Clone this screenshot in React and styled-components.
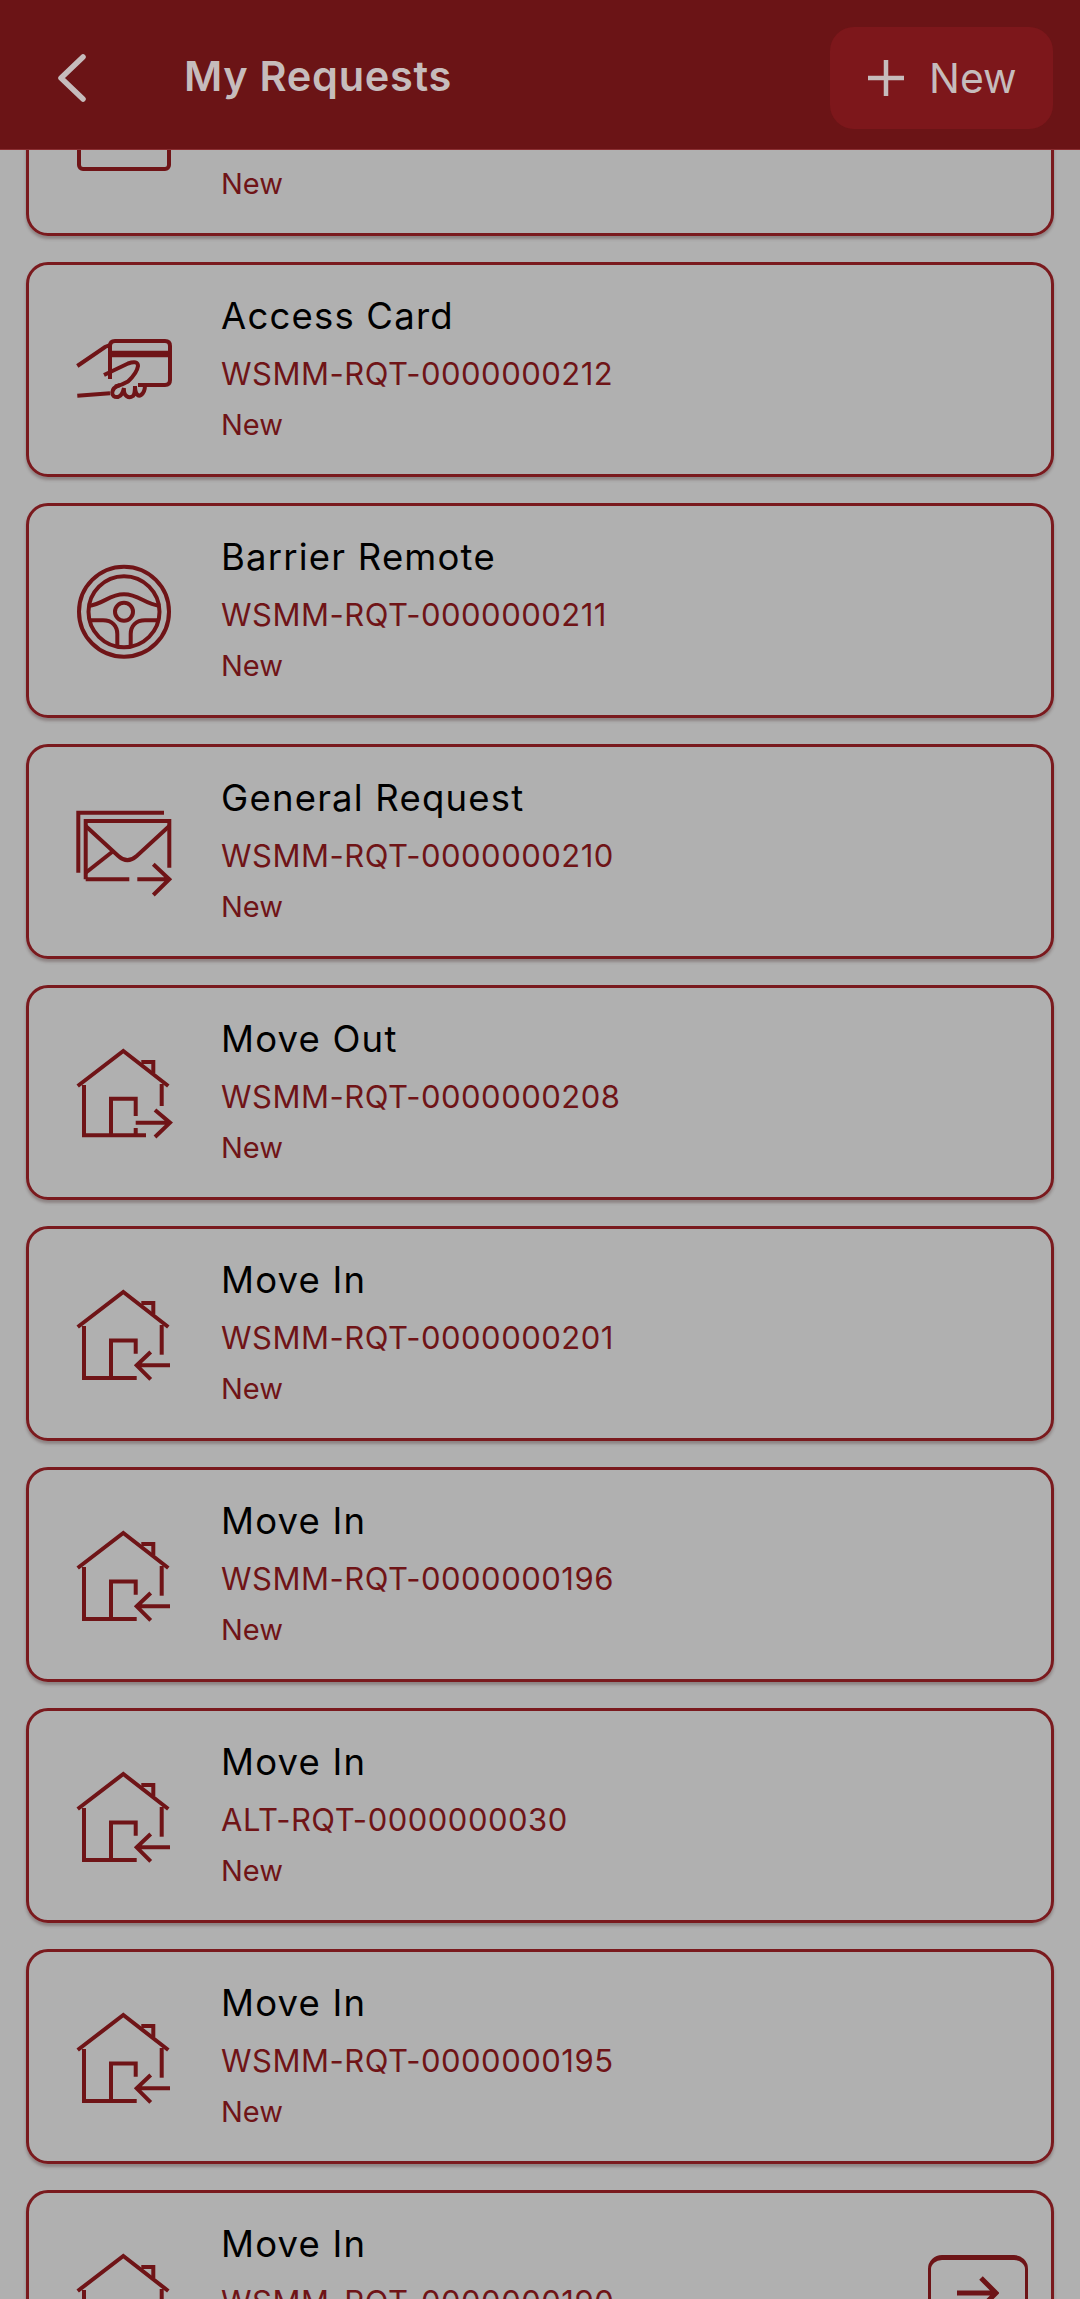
import React from "react";
import styled, { createGlobalStyle } from "styled-components";

const Global = createGlobalStyle`
  html, body { margin: 0; padding: 0; background: #b0b0b0; }
  * { box-sizing: border-box; }
`;
const Page = styled.div`
  position: relative; width: 1080px; height: 2299px; overflow: hidden;
  background: #b0b0b0; font-family: "Inter", "Liberation Sans", sans-serif;
`;
const Header = styled.header`
  position: absolute; top: 0; left: 0; right: 0; z-index: 2; height: 150px;
  display: flex; align-items: center; padding: 0 27px 0 54px;
  background: #6b1416; border-bottom: 1px solid #8a2f32;
`;
const Back = styled.svg`width: 36px; height: 52px; flex: none; margin-top: 7px;`;
const Title = styled.h1`
  flex: 1; margin: 2px 0 0 94px; font-size: 41.5px; line-height: 50px; font-weight: 600; color: #c6bcbc; letter-spacing: .7px;
`;
const NewButton = styled.div`
  width: 223px; height: 102px; margin-top: 6px; border-radius: 24px; background: #7d171b;
  display: flex; align-items: center; padding-left: 38px; gap: 25px;
  color: #c6bcbc; font-size: 41px; line-height: 50px;
`;
const List = styled.main`
  display: flex; flex-direction: column; gap: 26px; padding: 21px 26px 0;
`;
const Card = styled.article`
  flex: none; height: 215px; display: flex; align-items: center; padding: 0 23px 0 47px;
  border: 3px solid #7a1a1e; border-radius: 22px; box-shadow: 0 3px 3px rgba(60,30,30,.3);
`;
const IconSvg = styled.svg`
  width: 96px; height: 96px; flex: none; overflow: visible;
  fill: none; stroke: #6f1417; stroke-width: 4;
`;
const Texts = styled.div`
  flex: 1; display: flex; flex-direction: column; margin-left: 49px;
`;
const Name = styled.div`font-size: 36.5px; line-height: 44px; color: #000; letter-spacing: 1.2px; margin-top: -4px;`;
const Code = styled.div`font-size: 31px; line-height: 40px; margin-top: 16px; color: #6f1417; letter-spacing: .5px;`;
const Status = styled.div`font-size: 29px; line-height: 34px; margin-top: 14px; color: #6f1417;`;
const GoButton = styled.div`
  width: 100px; height: 72px; flex: none; margin-bottom: 14px; border: 3px solid #6d1417; border-top-width: 5px; border-radius: 14px;
  display: flex; align-items: center; justify-content: center;
`;
const GoIcon = styled.svg`width: 42px; height: 36px; fill: none; stroke: #6d1417; stroke-width: 5; margin-top: 2px;`;

const House = ({ out }) => (
  <IconSvg viewBox="0 0 96 96">
    <path d="M1.7 41 47.3 6 92.3 41" />
    <path d="M67.3 19V17H77.3V28" />
    {out ? (
      <>
        <path d="M8 40V90.3H70" />
        <path d="M85.7 39V61" />
        <path d="M35 90V53.7H59.7V71M59.7 83V90" />
        <path d="M59.7 77.7H94M79 65 94 77.7 79 92" />
      </>
    ) : (
      <>
        <path d="M8 40V92H60.7" />
        <path d="M85.7 39V68.7" />
        <path d="M35 92V54.5H59.7V67.7" />
        <path d="M94 79.3H60.7M74.7 66 60.7 79.3 74.7 93.3" />
      </>
    )}
  </IconSvg>
);
const Wheel = () => (
  <IconSvg viewBox="0 0 96 96">
    <circle cx="48" cy="48.7" r="45" />
    <circle cx="48" cy="48.7" r="35.5" />
    <circle cx="48" cy="48.7" r="9" />
    <path d="M12.3 43C28 41 33 31.3 48 31.3S68 41 84 43" />
    <path d="M12.3 57.3H27C36 57.3 41.3 63 41.3 71V84" />
    <path d="M84 57.3H69C60 57.3 54.7 63 54.7 71V84" />
  </IconSvg>
);
const Mail = () => (
  <IconSvg viewBox="0 0 96 96">
    <path d="M2.3 68.7V8.7H88" />
    <path d="M9.7 75.3V17H93.3V63.7M9.7 75.3H53.3" />
    <path d="M9.7 22 42.3 52Q51.3 60.3 60.7 52L93.3 22" />
    <path d="M9.7 68.7 37.3 47" />
    <path d="M61.3 75.3H93.3M77.3 60.3 93.3 75.3 77.3 91" />
  </IconSvg>
);
const CreditCard = () => (
  <IconSvg viewBox="0 0 96 96">
    <path d="M34 57V24Q34 19 39 19H89Q94 19 94 24V58Q94 63 89 63H62" />
    <path d="M34 32H94" strokeWidth="6.5" />
    <path d="M1.3 44 29 25 34 23" />
    <path d="M28 53 52 41.5Q62 38 62 44 61 51 52 59.5 46 63 39 64.7" />
    <path d="M1.3 73.7 34 71.3" />
    <path d="M44 63C34 66 34 76 42 75 46 74 47 70 48 66 47 74 53 77 57 74 59 72 59 68 59 64 59 72 62 75 65 73 68 71 69 67 69 63" />
  </IconSvg>
);
const Box = () => (
  <IconSvg viewBox="0 0 96 96">
    <rect x="3" y="-20" width="90" height="108" rx="4" />
  </IconSvg>
);

const items = [
  { icon: <Box />, name: "Move In", code: "WSMM-RQT-0000000213" },
  { icon: <CreditCard />, name: "Access Card", code: "WSMM-RQT-0000000212" },
  { icon: <Wheel />, name: "Barrier Remote", code: "WSMM-RQT-0000000211" },
  { icon: <Mail />, name: "General Request", code: "WSMM-RQT-0000000210" },
  { icon: <House out />, name: "Move Out", code: "WSMM-RQT-0000000208" },
  { icon: <House />, name: "Move In", code: "WSMM-RQT-0000000201" },
  { icon: <House />, name: "Move In", code: "WSMM-RQT-0000000196" },
  { icon: <House />, name: "Move In", code: "ALT-RQT-0000000030" },
  { icon: <House />, name: "Move In", code: "WSMM-RQT-0000000195" },
  { icon: <House />, name: "Move In", code: "WSMM-RQT-0000000190", go: true },
];

export default function App() {
  return (
    <Page>
      <Global />
      <Header>
        <Back viewBox="0 0 36 52" fill="none" stroke="#c6bcbc" strokeWidth="5.5" strokeLinecap="round" strokeLinejoin="round">
          <path d="M29 5 7 26 29 47" />
        </Back>
        <Title>My Requests</Title>
        <NewButton>
          <svg width="36" height="36" viewBox="0 0 36 36" stroke="#c6bcbc" strokeWidth="4.5"><path d="M18 0V36M0 18H36" /></svg>
          <span>New</span>
        </NewButton>
      </Header>
      <List>
        {items.map((it, i) => (
          <Card key={i}>
            {it.icon}
            <Texts>
              <Name>{it.name}</Name>
              <Code>{it.code}</Code>
              <Status>New</Status>
            </Texts>
            {it.go && (
              <GoButton>
                <GoIcon viewBox="0 0 42 36"><path d="M0 18H38M24 3 39 18 24 33" /></GoIcon>
              </GoButton>
            )}
          </Card>
        ))}
      </List>
    </Page>
  );
}
